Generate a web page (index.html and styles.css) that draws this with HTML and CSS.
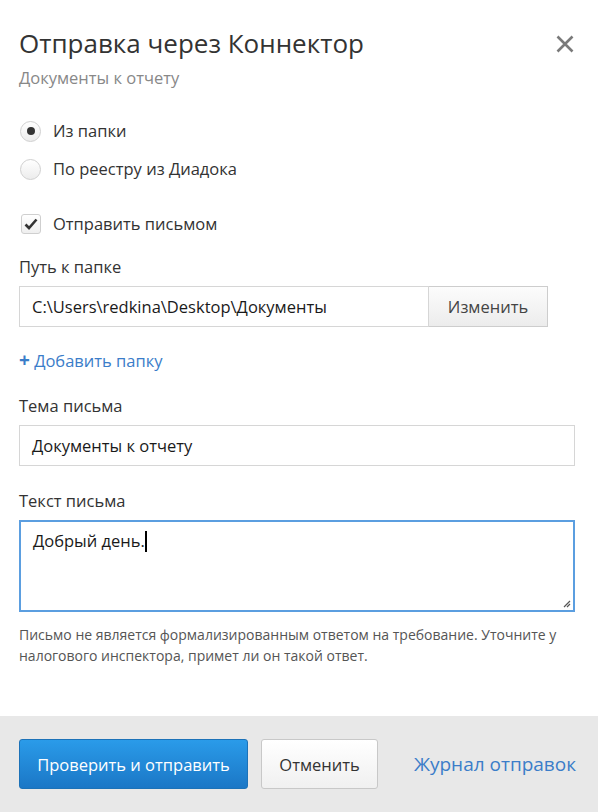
FILE: index.html
```html
<!DOCTYPE html>
<html lang="ru">
<head>
  <meta charset="UTF-8" />
  <title>Отправка через Коннектор</title>
  <link rel="stylesheet" href="styles.css">
</head>
<body>
  <div class="dialog">
    <div class="content">
      <div class="header">
        <h2>Отправка через Коннектор</h2>
        <span class="close">
          <svg width="18" height="18" viewBox="0 0 18 18"><path d="M1.5 1.5 L16.5 16.5 M16.5 1.5 L1.5 16.5" stroke="#7a7a7a" stroke-width="2.6" fill="none"/></svg>
        </span>
      </div>
      <div class="subtitle">Документы к отчету</div>

      <div class="options">
        <label class="radio"><span class="dot checked"></span>Из папки</label>
        <label class="radio"><span class="dot"></span>По реестру из Диадока</label>
      </div>

      <label class="check">
        <span class="box">
          <svg width="14" height="12" viewBox="0 0 14 12"><path d="M1.5 6.5 L5 10 L12.5 1.5" stroke="#333" stroke-width="2.6" fill="none"/></svg>
        </span>
        Отправить письмом
      </label>

      <div class="field">
        <div class="label">Путь к папке</div>
        <div class="path-row">
          <div class="input">C:\Users\redkina\Desktop\Документы</div>
          <button class="btn-change">Изменить</button>
        </div>
      </div>

      <a class="add-folder" href="#"><span class="plus">+</span> Добавить папку</a>

      <div class="field subject">
        <div class="label">Тема письма</div>
        <div class="input wide">Документы к отчету</div>
      </div>

      <div class="field body-text">
        <div class="label">Текст письма</div>
        <div class="textarea">Добрый день.<span class="caret"></span>
          <svg class="grip" width="9" height="9" viewBox="0 0 9 9"><path d="M8 2 L2 8 M8 5 L5 8" stroke="#555" stroke-width="1.2"/></svg>
        </div>
      </div>

      <p class="note">Письмо не является формализированным ответом на требование. Уточните у налогового инспектора, примет ли он такой ответ.</p>
    </div>

    <div class="footer">
      <button class="btn-primary">Проверить и отправить</button>
      <button class="btn-cancel">Отменить</button>
      <a class="journal" href="#">Журнал отправок</a>
    </div>
  </div>
</body>
</html>
```

FILE: styles.css
```css
body {
  margin: 0;
  background: #fff;
  font-family: "Open Sans", "Noto Sans", sans-serif;
  color: #222;
}
.dialog {
  width: 598px;
  height: 812px;
  display: flex;
  flex-direction: column;
}
.content {
  flex: 1;
  padding: 24px 23px 0 19px;
}
.header {
  display: flex;
  justify-content: space-between;
  align-items: center;
}
h2 {
  margin: 0;
  font-size: 26px;
  font-weight: normal;
  color: #333;
  line-height: 38px;
}
.close {
  display: flex;
  margin-right: 1px;
  margin-top: 2px;
}
.subtitle {
  font-size: 16.5px;
  color: #888;
  margin-top: 4px;
  line-height: 24px;
}
.options {
  margin-top: 29px;
  display: flex;
  flex-direction: column;
  gap: 14px;
}
.radio, .check {
  display: flex;
  align-items: center;
  font-size: 16.5px;
  color: #333;
  line-height: 24px;
}
.dot {
  width: 21px;
  height: 21px;
  border-radius: 50%;
  border: 1px solid #d0d0d0;
  background: linear-gradient(#fff, #ececec);
  box-sizing: border-box;
  margin-right: 12px;
  margin-left: 1px;
  position: relative;
}
.dot.checked::after {
  content: '';
  position: absolute;
  left: 5.5px;
  top: 5.5px;
  width: 8px;
  height: 8px;
  border-radius: 50%;
  background: #333;
}
.check {
  margin-top: 31px;
}
.box {
  width: 20px;
  height: 20px;
  border: 1px solid #cfcfcf;
  border-radius: 3px;
  box-sizing: border-box;
  background: linear-gradient(#fff, #efefef);
  display: flex;
  align-items: center;
  justify-content: center;
  margin-right: 12px;
  margin-left: 2px;
}
.field {
  margin-top: 19px;
}
.label {
  font-size: 16.5px;
  color: #333;
  line-height: 24px;
  margin-bottom: 7px;
}
.path-row {
  display: flex;
  width: 529px;
}
.input {
  height: 41px;
  box-sizing: border-box;
  border: 1px solid #d6d6d6;
  padding: 0 12px;
  display: flex;
  align-items: center;
  font-size: 16.5px;
  color: #1a1a1a;
  flex: 1;
}
.input.wide {
  width: 556px;
}
.btn-change {
  width: 119px;
  height: 41px;
  border: 1px solid #cdcdcd;
  border-left: none;
  background: linear-gradient(#fcfcfc, #ececec);
  font-family: inherit;
  font-size: 16.5px;
  color: #444;
  padding: 0;
}
.add-folder {
  display: block;
  margin-top: 21px;
  color: #3b7dc9;
  text-decoration: none;
  font-size: 16.5px;
  line-height: 24px;
}
.plus {
  font-weight: bold;
  font-size: 19px;
}
.field.subject {
  margin-top: 21px;
}
.field.body-text {
  margin-top: 23px;
}
.textarea {
  width: 556px;
  height: 92px;
  box-sizing: border-box;
  border: 2px solid #5b9ee0;
  padding: 7px 12px;
  font-size: 16.5px;
  color: #1a1a1a;
  position: relative;
}
.caret {
  display: inline-block;
  width: 2px;
  height: 21px;
  background: #000;
  vertical-align: -5px;
}
.grip {
  position: absolute;
  right: 2px;
  bottom: 2px;
}
.note {
  margin: 12px 0 0;
  font-size: 14px;
  line-height: 21px;
  color: #555;
}
.footer {
  height: 96px;
  background: #e8e8e8;
  display: flex;
  align-items: center;
  padding: 0 22px 0 19px;
}
.btn-primary {
  width: 229px;
  height: 50px;
  border: 1px solid #1c72b8;
  border-radius: 3px;
  background: linear-gradient(#2a9be9, #1b77c6);
  color: #fff;
  font-family: inherit;
  font-size: 16.5px;
  padding: 0;
}
.btn-cancel {
  width: 117px;
  height: 50px;
  margin-left: 13px;
  border: 1px solid #c8c8c8;
  border-radius: 3px;
  background: linear-gradient(#fff, #f0f0f0);
  color: #333;
  font-family: inherit;
  font-size: 16.5px;
  padding: 0;
}
.journal {
  margin-left: auto;
  color: #3b7dc9;
  text-decoration: none;
  font-size: 19px;
}
```
